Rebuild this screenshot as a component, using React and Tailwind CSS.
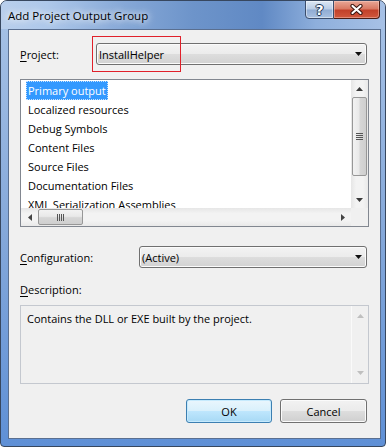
import React from 'react';

const Tri = ({ dir = 'down', color = '#000', w = 7, h = 4 }) => {
  const pts = {
    down: `0,0 ${w},0 ${w / 2},${h}`,
    up: `0,${h} ${w},${h} ${w / 2},0`,
  };
  return (
    <svg width={w} height={h} viewBox={`0 0 ${w} ${h}`}>
      <polygon points={pts[dir]} fill={color} />
    </svg>
  );
};

const SideTri = ({ dir = 'left', color = '#444' }) => (
  <svg width="4" height="7" viewBox="0 0 4 7">
    <polygon points={dir === 'left' ? '4,0 4,7 0,3.5' : '0,0 0,7 4,3.5'} fill={color} />
  </svg>
);

const Combo = ({ value, className }) => (
  <div
    className={`h-[22px] rounded-[3px] border border-[#707070] bg-[linear-gradient(180deg,#f3f3f3_0%,#ececec_48%,#dddddd_52%,#d2d2d2_100%)] flex items-center justify-between pl-[2px] pr-[4px] shadow-[inset_0_0_0_1px_#fbfbfb] ${className}`}
  >
    <span>{value}</span>
    <Tri dir="down" color="#0f0f0f" />
  </div>
);

const items = [
  'Primary output',
  'Localized resources',
  'Debug Symbols',
  'Content Files',
  'Source Files',
  'Documentation Files',
  'XML Serialization Assemblies',
];

const ListBox = () => (
  <div className="h-[148px] mx-[11px] mt-[14px] border border-[#828790] bg-white flex flex-col">
    <div className="flex flex-1 min-h-0">
      <div className="flex-1 overflow-hidden pt-px">
        {items.map((t, i) => (
          <div key={t} className="h-[19px] flex items-center pl-[5px]">
            <span
              className={
                i === 0
                  ? 'bg-[#3399ff] text-white h-[19px] px-[2px] flex items-center outline outline-1 outline-dotted outline-[#c8e2ff] -outline-offset-1'
                  : 'px-[2px]'
              }
            >
              {t}
            </span>
          </div>
        ))}
      </div>
      {/* vertical scrollbar */}
      <div className="w-[17px] bg-[linear-gradient(90deg,#e6e6e6,#f3f3f3_30%,#f3f3f3_70%,#e9e9e9)] flex flex-col">
        <div className="h-[17px] flex items-center justify-center">
          <Tri dir="up" color="#3a3a3a" />
        </div>
        <div className="h-[79px] mx-px rounded-[2px] border border-[#979797] bg-[linear-gradient(90deg,#f2f2f2,#e9e9e9_45%,#d6d6d6_55%,#cfcfcf)] flex flex-col items-center justify-center gap-[1px]">
          {[0, 1, 2, 3].map((k) => (
            <div key={k} className="w-[7px] h-px bg-[#555]" />
          ))}
        </div>
        <div className="flex-1" />
        <div className="h-[17px] flex items-center justify-center">
          <Tri dir="down" color="#3a3a3a" />
        </div>
      </div>
    </div>
    {/* horizontal scrollbar */}
    <div className="h-[18px] flex">
      <div className="flex-1 flex bg-[linear-gradient(180deg,#e6e6e6,#f3f3f3_30%,#f3f3f3_70%,#e9e9e9)]">
        <div className="w-[17px] flex items-center justify-center">
          <SideTri dir="left" />
        </div>
        <div className="w-[45px] my-px rounded-[2px] border border-[#979797] bg-[linear-gradient(180deg,#f2f2f2,#e9e9e9_45%,#d6d6d6_55%,#cfcfcf)] flex items-center justify-center gap-[1px]">
          {[0, 1, 2, 3].map((k) => (
            <div key={k} className="w-px h-[7px] bg-[#555]" />
          ))}
        </div>
        <div className="flex-1" />
        <div className="w-[17px] flex items-center justify-center">
          <SideTri dir="right" />
        </div>
      </div>
      <div className="w-[17px] bg-[#f0f0f0]" />
    </div>
  </div>
);

const Label = ({ first, rest }) => (
  <span>
    <span className="underline underline-offset-2">{first}</span>
    {rest}
  </span>
);

export default function App() {
  return (
    <div className="w-[387px] h-[447px] bg-white font-['Open_Sans',sans-serif] text-[11px] text-black leading-none">
      <div className="w-[386px] h-[447px] rounded-t-[7px] rounded-b-[4px] border border-[#37475f] bg-[linear-gradient(180deg,#a8c3e7_0%,#86a9da_50%,#5f90d6_100%)] flex flex-col overflow-hidden">
        {/* title bar */}
        <div className="h-[28px] flex justify-between items-start bg-[linear-gradient(90deg,#b9cfec_0%,#aec8ea_12%,#86a8d7_32%,#6d94ca_50%,#6089c4_68%,#8eafdc_82%,#a7c1e6_100%)]">
          <div className="ml-[7px] mt-[9px] text-[11.5px] [text-shadow:0_0_6px_#fff,0_0_10px_#fff]">
            Add Project Output Group
          </div>
          <div className="flex -mt-px mr-[5px]">
            <div className="w-[29px] h-[19px] border border-[#3b4d6c] rounded-bl-[4px] bg-[linear-gradient(180deg,#dce7f4_0%,#b9cce5_48%,#90acd3_52%,#a9c0e0_100%)] flex items-center justify-center shadow-[inset_0_0_0_1px_rgba(255,255,255,0.45)]">
              <span className="text-white font-bold text-[14px] font-['DejaVu_Sans',sans-serif] [text-shadow:0_0_1px_#213654,1px_0_0_#213654,-1px_0_0_#213654,0_1px_0_#213654,0_-1px_0_#213654]">
                ?
              </span>
            </div>
            <div className="w-[46px] h-[19px] border border-l-0 border-[#4a1d15] rounded-br-[4px] bg-[linear-gradient(180deg,#e8a796_0%,#d97a64_45%,#c2412a_55%,#d0583d_100%)] flex items-center justify-center shadow-[inset_0_0_0_1px_rgba(255,220,210,0.4)]">
              <svg width="13" height="11" viewBox="0 0 13 11">
                <path d="M2.5 2 L10.5 9 M10.5 2 L2.5 9" stroke="#3a1610" strokeWidth="4.2" strokeLinecap="round" />
                <path d="M2.5 2 L10.5 9 M10.5 2 L2.5 9" stroke="#ffffff" strokeWidth="2.2" strokeLinecap="round" />
              </svg>
            </div>
          </div>
        </div>

        {/* client area */}
        <div className="ml-[7px] w-[373px] h-[410px] border border-[#5a6f90] bg-[#f0f0f0] flex flex-col relative">
          {/* project row */}
          <div className="mt-[13px] flex items-center pl-[11px] pr-[13px]">
            <div className="w-[76px]">
              <Label first="P" rest="roject:" />
            </div>
            <Combo value="InstallHelper" className="flex-1" />
          </div>
          {/* annotation rectangle */}
          <div className="absolute left-[83px] top-[6px] w-[89px] h-[36px] border border-[#e0202a]" />

          <ListBox />

          {/* configuration row */}
          <div className="mt-[19px] flex items-center pl-[11px] pr-[13px]">
            <div className="w-[119px]">
              <Label first="C" rest="onfiguration:" />
            </div>
            <Combo value="(Active)" className="flex-1" />
          </div>

          <div className="mt-[16px] pl-[11px] h-[14px]">
            <Label first="D" rest="escription:" />
          </div>

          {/* description */}
          <div className="mt-[7px] mx-[11px] h-[79px] border border-[#c4c8cf] bg-[#f0f0f0] flex">
            <div className="flex-1 pl-[6px] pt-[7px]">Contains the DLL or EXE built by the project.</div>
            <div className="w-[17px] border-l border-[#fafafa] flex flex-col justify-between items-center py-[8px]">
              <Tri dir="up" color="#bfbfbf" />
              <Tri dir="down" color="#bfbfbf" />
            </div>
          </div>

          {/* buttons */}
          <div className="mt-[15px] flex justify-end gap-[8px] pr-[13px]">
            <div className="w-[86px] h-[24px] rounded-[3px] border border-[#3c7fb1] bg-[linear-gradient(180deg,#eaf6fd_0%,#d9f0fc_48%,#bee6fd_52%,#a7d9f5_100%)] shadow-[inset_0_0_0_1px_#c6eafd] flex items-center justify-center">
              OK
            </div>
            <div className="w-[87px] h-[24px] rounded-[3px] border border-[#707070] bg-[linear-gradient(180deg,#f2f2f2_0%,#ebebeb_48%,#dddddd_52%,#cfcfcf_100%)] shadow-[inset_0_0_0_1px_#fbfbfb] flex items-center justify-center">
              Cancel
            </div>
          </div>
        </div>
      </div>
    </div>
  );
}
